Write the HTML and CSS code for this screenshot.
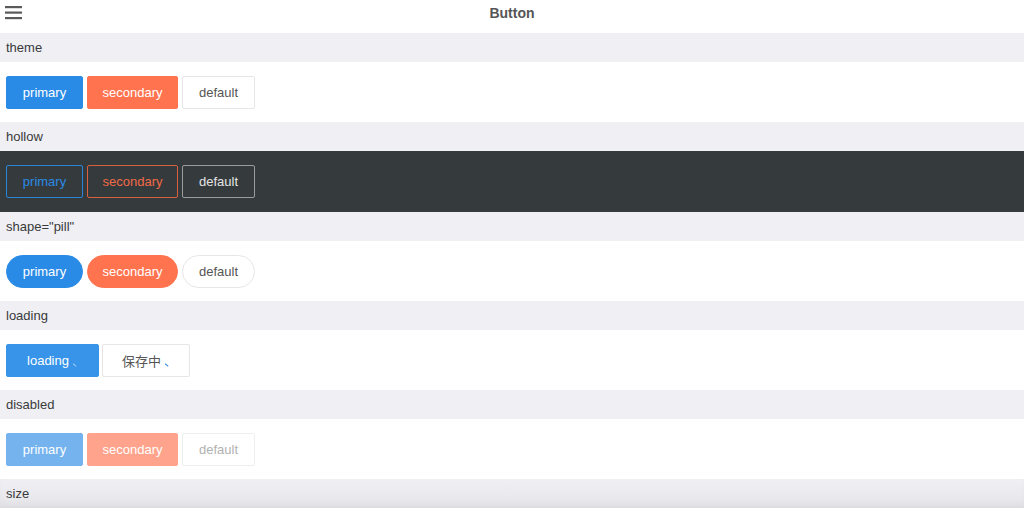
FILE: index.html
```html
<!DOCTYPE html>
<html lang="en">
<head>
  <meta charset="UTF-8" />
  <meta name="viewport" content="width=device-width, initial-scale=1.0"/>
  <title>Button</title>
  <link rel="stylesheet" href="styles.css">
</head>
<body>

  <header class="topbar">
    <span class="menu-icon">
      <svg width="17" height="14" viewBox="0 0 17 14">
        <rect x="0" y="0" width="17" height="2.2" fill="#5a5a5a"/>
        <rect x="0" y="5.5" width="17" height="2.2" fill="#5a5a5a"/>
        <rect x="0" y="11" width="17" height="2.2" fill="#5a5a5a"/>
      </svg>
    </span>
    <h1>Button</h1>
  </header>

  <main>
    <div class="demo-title">theme</div>
    <div class="demo-block">
      <button class="btn btn-primary w-primary">primary</button>
      <button class="btn btn-secondary w-secondary">secondary</button>
      <button class="btn btn-default w-default">default</button>
    </div>

    <div class="demo-title">hollow</div>
    <div class="demo-block dark">
      <button class="btn hollow-primary w-primary">primary</button>
      <button class="btn hollow-secondary w-secondary">secondary</button>
      <button class="btn hollow-default w-default">default</button>
    </div>

    <div class="demo-title">shape="pill"</div>
    <div class="demo-block">
      <button class="btn pill btn-primary w-primary">primary</button>
      <button class="btn pill btn-secondary w-secondary">secondary</button>
      <button class="btn pill btn-default w-default">default</button>
    </div>

    <div class="demo-title">loading</div>
    <div class="demo-block">
      <button class="btn btn-primary loading-btn w-loading">loading <i class="spinner light"></i></button>
      <button class="btn btn-default loading-btn w-saving">保存中 <i class="spinner blue"></i></button>
    </div>

    <div class="demo-title">disabled</div>
    <div class="demo-block">
      <button class="btn btn-primary disabled w-primary">primary</button>
      <button class="btn btn-secondary disabled w-secondary">secondary</button>
      <button class="btn btn-default disabled w-default">default</button>
    </div>

    <div class="demo-title last">size</div>
  </main>

</body>
</html>
```

FILE: styles.css
```css
body {
  font-family: "Liberation Sans", Arial, "Noto Sans CJK SC", sans-serif;
  margin: 0;
  background: #fff;
  color: #333;
  overflow: hidden;
}
.topbar {
  height: 33px;
  display: flex;
  align-items: center;
  justify-content: center;
  position: relative;
  background: #fff;
}
.topbar h1 {
  margin: 0;
  font-size: 14px;
  font-weight: bold;
  color: #555;
  margin-top: -7px;
}
.menu-icon {
  position: absolute;
  left: 5px;
  top: 6px;
  line-height: 0;
}
.demo-title {
  height: 29px;
  line-height: 29px;
  padding-left: 6px;
  font-size: 13px;
  color: #3a3a3a;
  background: #efeff4;
}
.demo-title.last {
  background: linear-gradient(#efeff4, #e6e6ea);
  box-shadow: inset 0 -6px 10px -4px rgba(0,0,0,0.06);
}
.demo-block {
  display: flex;
  gap: 4px;
  padding: 14px 6px 13.3px;
  background: #fff;
}
.demo-block.dark {
  background: #353a3d;
}
.btn {
  height: 33px;
  border: 1px solid transparent;
  border-radius: 2px;
  font-family: inherit;
  font-size: 13px;
  padding: 0;
  display: flex;
  align-items: center;
  justify-content: center;
  box-sizing: border-box;
}
.w-primary { width: 77px; }
.w-secondary { width: 91px; }
.w-default { width: 73px; }
.w-loading { width: 93px; }
.w-saving { width: 88px; margin-left: -1px; }
.btn-primary {
  background: #2a8be6;
  border-color: #2a8be6;
  color: #fff;
}
.btn-secondary {
  background: #ff734f;
  border-color: #ff734f;
  color: #fff;
}
.btn-default {
  background: #fff;
  border-color: #e6e6e6;
  color: #555;
}
.hollow-primary {
  background: transparent;
  border-color: #2a84d8;
  color: #2a8be6;
}
.hollow-secondary {
  background: transparent;
  border-color: #d9603f;
  color: #f26a47;
}
.hollow-default {
  background: transparent;
  border-color: #9a9c9e;
  color: #e4e4e4;
}
.pill {
  border-radius: 17px;
}
.loading-btn.btn-primary {
  background: #3794e8;
  border-color: #3794e8;
}
.spinner {
  display: inline-block;
  width: 4px;
  height: 4px;
  margin-left: 5px;
  margin-top: 6px;
  border-bottom: 1px solid;
  transform: rotate(40deg);
}
.spinner.light { border-color: #9cc9f2; }
.spinner.blue { border-color: #2a8be6; }
.disabled {
  opacity: 0.65;
}
.btn-default.disabled {
  color: #888;
}
```
